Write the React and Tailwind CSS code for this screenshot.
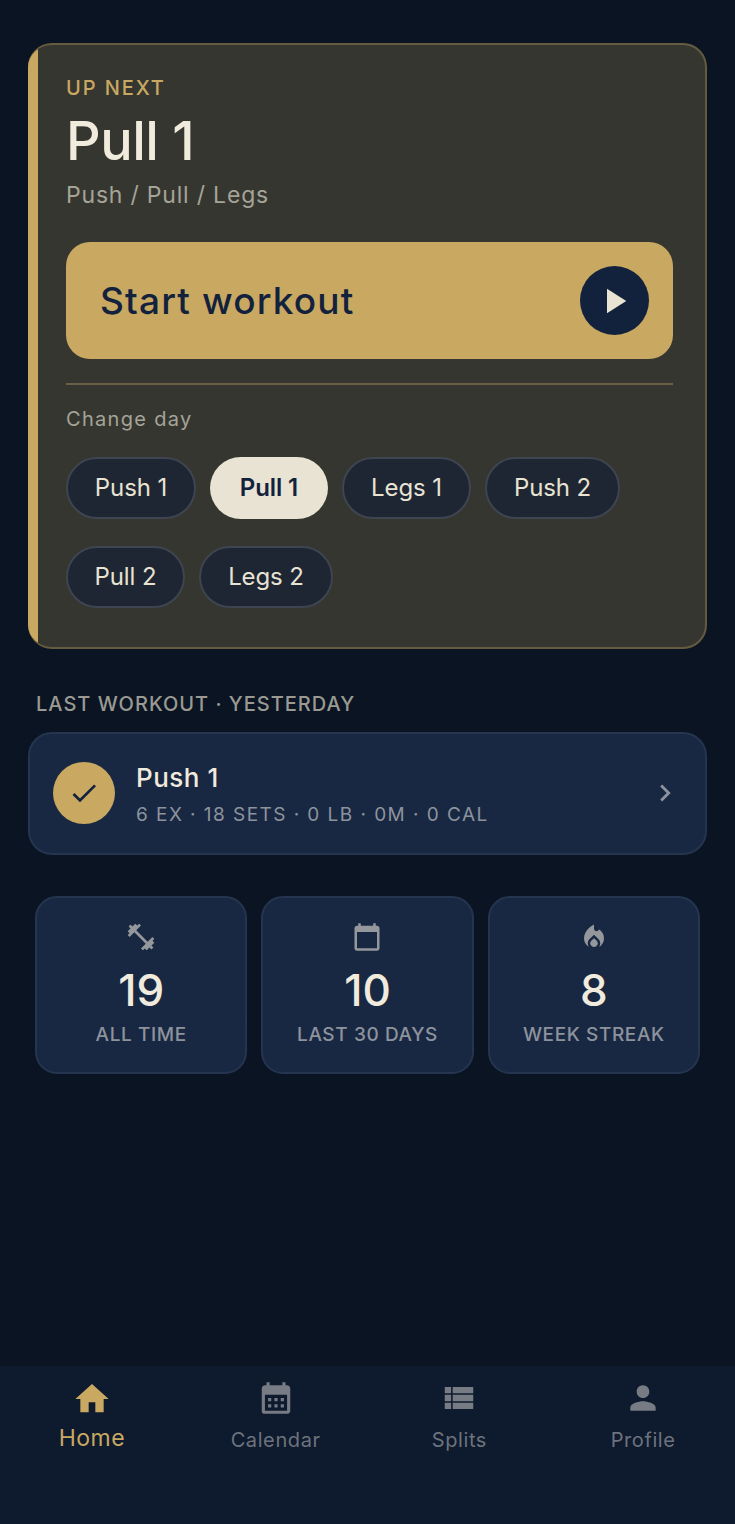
import React from "react";
import { MdCalendarMonth, MdCalendarToday, MdCheck, MdChevronRight, MdFitnessCenter, MdHome, MdLocalFireDepartment, MdPerson, MdPlayArrow, MdViewList } from "react-icons/md";

const days = [
  { name: "Push 1", w: "w-[130px]" },
  { name: "Pull 1", w: "w-[118px]", active: true },
  { name: "Legs 1", w: "w-[129px]" },
  { name: "Push 2", w: "w-[135px]" },
  { name: "Pull 2", w: "w-[119px]" },
  { name: "Legs 2", w: "w-[134px]" },
];

const stats = [
  { icon: <MdFitnessCenter size={32} />, value: "19", label: "ALL TIME" },
  { icon: <MdCalendarToday size={30} />, value: "10", label: "LAST 30 DAYS" },
  { icon: <MdLocalFireDepartment size={30} />, value: "8", label: "WEEK STREAK" },
];

const tabs = [
  { icon: <MdCalendarMonth size={38} />, label: "Calendar" },
  { icon: <MdViewList size={38} />, label: "Splits" },
  { icon: <MdPerson size={38} />, label: "Profile" },
];

export default function App() {
  return (
    <div className="h-[1524px] flex flex-col bg-linear-to-b from-[#0a1422] to-[#0b1423] font-['Inter',sans-serif] overflow-hidden">
      <div className="flex-1 px-7 pt-[43px]">
        {/* up next */}
        <div className="h-[606px] flex overflow-hidden rounded-[24px] bg-[#363630] border-2 border-l-0 border-[#655b41]">
          <div className="w-[10px] bg-[#c9a862]" />
          <div className="flex-1 pl-[28px] pr-[32px] pt-[30px]">
            <p className="text-[20px] leading-[26px] tracking-[1.9px] font-medium text-[#c9a862]">UP NEXT</p>
            <h1 className="mt-[7px] text-[54px] leading-[66px] font-medium tracking-[-0.5px] text-[#f0ebdd]">Pull 1</h1>
            <p className="mt-[6px] text-[23px] leading-[30px] tracking-[0.8px] text-[#a5a498]">Push / Pull / Legs</p>
            <div className="mt-[32px] h-[117px] rounded-[24px] bg-[#c9a862] pl-[34px] pr-[24px] flex items-center justify-between">
              <span className="text-[37px] font-medium text-[#12223d] tracking-[1.15px]">Start workout</span>
              <div className="w-[69px] h-[69px] rounded-full bg-[#12223d] flex items-center justify-center">
                <MdPlayArrow size={42} className="text-[#e8e3d3] -ml-[2px]" />
              </div>
            </div>
            <div className="mt-[24px] h-[2px] bg-[#6b6045]" />
            <p className="mt-[21px] text-[20px] leading-[26px] tracking-[1.3px] text-[#a5a498]">Change day</p>
            <div className="mt-[25px] flex flex-wrap gap-x-[14px] gap-y-[27px]">
              {days.map((d) => (
                <div
                  key={d.name}
                  className={`h-[62px] rounded-full flex items-center justify-center text-[24px] tracking-[-0.1px] ${d.w} ${
                    d.active ? "bg-[#e8e3d3] text-[#12223d] font-semibold" : "bg-[#1e2633] border-2 border-[#3e4551] text-[#e8e3d3]"
                  }`}
                >
                  {d.name}
                </div>
              ))}
            </div>
          </div>
        </div>

        {/* last workout */}
        <p className="mt-[42px] ml-2 text-[20px] leading-[26px] font-medium tracking-[1px] text-[#9a9a93]">LAST WORKOUT · YESTERDAY</p>
        <div className="mt-[15px] h-[123px] rounded-[24px] bg-[#192842] border-2 border-[#26354f] pl-[23px] pr-[23px] pb-[2px] flex items-center">
          <div className="w-[62px] h-[62px] rounded-full bg-[#c9a862] flex items-center justify-center">
            <MdCheck size={32} className="text-[#12223d]" />
          </div>
          <div className="ml-[21px] flex-1 pt-[4px]">
            <p className="text-[26px] leading-[34px] font-medium tracking-[0.5px] text-[#f0ebdd]">Push 1</p>
            <p className="mt-[7px] text-[19px] leading-[26px] tracking-[1.45px] text-[#8d939d]">6 EX · 18 SETS · 0 LB · 0M · 0 CAL</p>
          </div>
          <MdChevronRight size={34} className="text-[#8d939d]" />
        </div>

        {/* stats */}
        <div className="mt-[41px] mx-[7px] grid grid-cols-3 gap-[14px]">
          {stats.map((s) => (
            <div key={s.label} className="h-[178px] rounded-[22px] bg-[#192842] border-2 border-[#26354f] flex flex-col items-center pt-[22px]">
              <div className="h-[34px] flex items-center text-[#94989c]">{s.icon}</div>
              <p className="mt-[9px] text-[44px] leading-[54px] font-medium text-[#f0ebdd]">{s.value}</p>
              <p className="mt-[5px] text-[19px] leading-[26px] font-medium tracking-[0.6px] text-[#8d939d]">{s.label}</p>
            </div>
          ))}
        </div>
      </div>

      {/* bottom nav */}
      <nav className="h-[158px] bg-[#0e1a2e] grid grid-cols-4 pt-[13px]">
        <div className="flex flex-col items-center text-[#c9a862]">
          <MdHome size={40} />
          <span className="text-[23px] leading-[32px] tracking-[0.5px] mt-[3px]">Home</span>
        </div>
        {tabs.map((t) => (
          <div key={t.label} className="flex flex-col items-center text-[#767b84]">
            {t.icon}
            <span className="text-[20px] leading-[28px] tracking-[0.6px] mt-[9px] text-[#6d737d]">{t.label}</span>
          </div>
        ))}
      </nav>
    </div>
  );
}
